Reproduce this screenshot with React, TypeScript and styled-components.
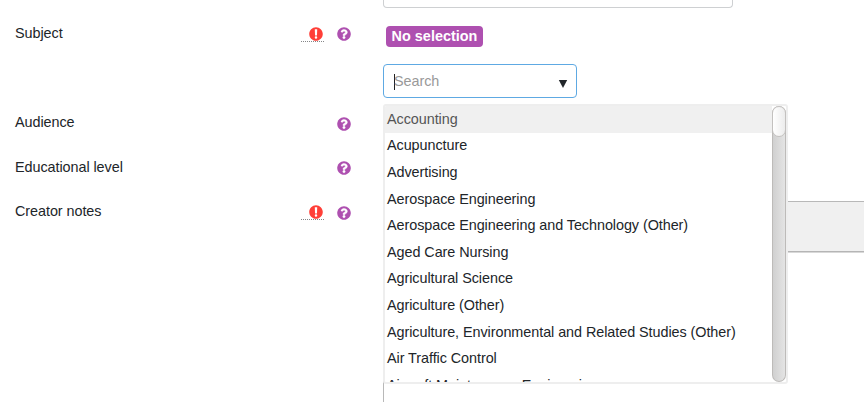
import React from "react";
import styled, { createGlobalStyle } from "styled-components";

const GlobalStyle = createGlobalStyle`
  * { box-sizing: border-box; }
  body { margin: 0; background: #fff; overflow: hidden; }
`;

const Page = styled.main`
  width: 864px;
  height: 402px;
  overflow: hidden;
  display: flex;
  flex-direction: column;
  background: #fff;
  color: #212529;
  font: 14.4px/21.6px "Liberation Sans", Arial, sans-serif;
  letter-spacing: -0.06px;
`;

const Row = styled.div<{ $height: number }>`
  display: grid;
  grid-template-columns: 286px 82px 1fr;
  padding-left: 15px;
  height: ${(p) => p.$height}px;
  flex: none;
`;

const Label = styled.label`
  padding-top: 1px;
`;

const Marks = styled.div`
  display: flex;
  align-items: flex-start;
`;

const Required = styled.abbr<{ $shown: boolean }>`
  display: flex;
  width: 23px;
  height: 20px;
  padding: 5px 1px 0 0;
  margin-right: 13px;
  justify-content: flex-end;
  text-decoration: none;
  background: ${(p) =>
    p.$shown
      ? "repeating-linear-gradient(90deg, #858688 0 1px, #fff 1px 2px) left bottom / 100% 1px no-repeat"
      : "none"};
`;

const HelpButton = styled.span<{ $top: number }>`
  display: flex;
  margin-top: ${(p) => p.$top}px;
`;

const Control = styled.div<{ $top: number }>`
  position: relative;
  padding-top: ${(p) => p.$top}px;
`;

const TextField = styled.div`
  width: 350px;
  height: 8px;
  border: 1px solid #ced0d2;
  border-top: 0;
  border-radius: 0 0 4px 4px;
`;

const Badge = styled.span`
  display: block;
  width: 97px;
  height: 21px;
  margin: 0 0 17px 3px;
  border-radius: 4px;
  background: #ae50b0;
  color: #fff;
  font-weight: 700;
  line-height: 21px;
  letter-spacing: 0.02px;
  text-align: center;
  white-space: nowrap;
`;

const SearchBox = styled.div`
  display: flex;
  align-items: center;
  width: 194px;
  height: 34px;
  padding: 1px 8px 0 10px;
  border: 1px solid #5ea9e3;
  border-radius: 4px;
  color: #999;
`;

const Caret = styled.span`
  width: 1px;
  height: 16px;
  margin-right: -1px;
  background: #222;
`;

const Arrow = styled.svg`
  margin: 4px 0 0 auto;
`;

const Suggestions = styled.div`
  position: absolute;
  z-index: 2;
  top: 82px;
  left: 0;
  display: flex;
  width: 405px;
  height: 280px;
  border: 2px solid #eee;
  border-radius: 3px;
  background: #fff;
  overflow: hidden;
`;

const List = styled.ul`
  flex: 1;
  margin: 0;
  padding: 0;
  list-style: none;
  white-space: nowrap;
  overflow: hidden;
`;

const Item = styled.li<{ $active: boolean }>`
  height: 26.6px;
  padding: 2.85px 2px 2px;
  color: ${(p) => (p.$active ? "#555" : "#212529")};
  background: ${(p) => (p.$active ? "#f0f0f0" : "transparent")};
`;

const Track = styled.div`
  width: 14px;
  height: 276px;
  border: 1px solid #bdbbb9;
  border-width: 0 1px 1px;
  border-radius: 7px;
  background: linear-gradient(90deg, #d0d0d0, #e4e4e4);
`;

const Thumb = styled.div`
  width: 14px;
  height: 31px;
  margin-left: -1px;
  border: 1px solid #c3c1bf;
  border-radius: 7px;
  background: linear-gradient(90deg, #fff, #ececec);
`;

const Editor = styled.div`
  width: 500px;
  height: 220px;
  border: 1px solid #b8b8b8;
`;

const Toolbar = styled.div`
  height: 50px;
  background: #f0f0f0;
  border-bottom: 1px solid #b5b5b5;
  box-shadow: 0 1px #d8d8d8;
`;

const Shape = styled.svg`
  display: block;
  width: 14px;
  height: 14px;
`;

const QuestionIcon = () => (
  <Shape viewBox="0 0 512 512">
    <path fill="#ae50b0" d="M504 256c0 137-111 248-248 248S8 393 8 256 119 8 256 8s248 111 248 248z" />
    <path fill="#fff" stroke="#fff" strokeWidth="12" d="M263 90c-55 0-90 23-117 64-4 5-3 13 3 17l35 26c5 4 13 3 17-2 18-23 30-36 57-36 21 0 46 13 46 33 0 15-12 22-32 34-24 13-55 30-55 71v7c0 7 5 12 12 12h58c7 0 12-5 12-12v-2c0-29 83-30 83-108 0-58-61-104-119-104zm-7 248a47 47 0 1 0 0 94 47 47 0 0 0 0-94z" />
  </Shape>
);

const ExclamationIcon = () => (
  <Shape viewBox="0 0 512 512">
    <path fill="#ff3f38" d="M504 256c0 137-111 248-248 248S8 393 8 256 119 8 256 8s248 111 248 248zM256 342a46 46 0 1 0 0 92 46 46 0 0 0 0-92zM212 93l8 210c1 7 6 12 12 12h48c6 0 11-5 12-12l8-210c0-7-6-13-13-13h-62c-7 0-13 6-13 13z" />
  </Shape>
);

const subjects = [
  "Accounting",
  "Acupuncture",
  "Advertising",
  "Aerospace Engineering",
  "Aerospace Engineering and Technology (Other)",
  "Aged Care Nursing",
  "Agricultural Science",
  "Agriculture (Other)",
  "Agriculture, Environmental and Related Studies (Other)",
  "Air Traffic Control",
  "Aircraft Maintenance Engineering",
];

type FieldProps = {
  label: string;
  height: number;
  required?: boolean;
  helpTop?: number;
  controlTop?: number;
  children?: React.ReactNode;
};

const Field = ({ label, height, required = false, helpTop = 5, controlTop = 0, children }: FieldProps) => (
  <Row $height={height}>
    <Label>{label}</Label>
    <Marks>
      <Required $shown={required}>{required && <ExclamationIcon />}</Required>
      <HelpButton $top={helpTop}><QuestionIcon /></HelpButton>
    </Marks>
    <Control $top={controlTop}>{children}</Control>
  </Row>
);

export default function App() {
  return (
    <>
      <GlobalStyle />
      <Page>
        <Row $height={22}>
          <span />
          <span />
          <TextField />
        </Row>
        <Field label="Subject" height={89} required controlTop={4}>
          <Badge>No selection</Badge>
          <SearchBox>
            <Caret />
            Search
            <Arrow width="10" height="10" viewBox="0 0 10 10">
              <path d="M.8 1h8.4L5 9z" fill="#212529" />
            </Arrow>
          </SearchBox>
          <Suggestions>
            <List>
              {subjects.map((name, i) => (
                <Item key={name} $active={i === 0}>{name}</Item>
              ))}
            </List>
            <Track><Thumb /></Track>
          </Suggestions>
        </Field>
        <Field label="Audience" height={45} helpTop={6} />
        <Field label="Educational level" height={44} />
        <Field label="Creator notes" height={202} required helpTop={6} controlTop={1}>
          <Editor><Toolbar /></Editor>
        </Field>
      </Page>
    </>
  );
}
